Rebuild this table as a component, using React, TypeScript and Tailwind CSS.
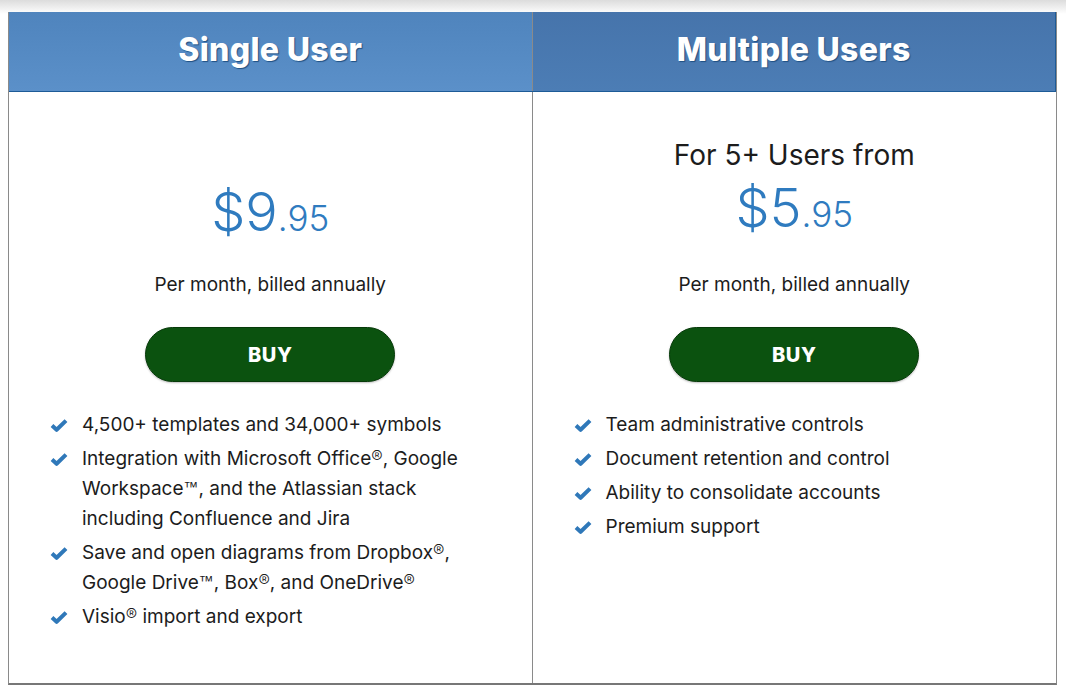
import React from 'react';

const Check: React.FC = () => (
  <svg className="w-[18px] h-[15px] shrink-0 mt-[8px]" viewBox="0 0 18 15" fill="none">
    <path d="M2 7.6 L6.6 11.8 L16 2.6" stroke="#2f78b9" strokeWidth={4} strokeLinejoin="round" />
  </svg>
);

const Item: React.FC<{ children: React.ReactNode }> = ({ children }) => (
  <li className="flex gap-[14px]">
    <Check />
    <span>{children}</span>
  </li>
);

const R = () => <sup className="text-[17px] font-light relative -top-[2px] leading-none">®</sup>;
const TM = () => (
  <sup className="text-[15px] relative -top-[3px] leading-none font-['Liberation_Sans',sans-serif]">™</sup>
);

const Price: React.FC<{ big: string }> = ({ big }) => (
  <div className="flex items-baseline text-[#2f7bbf] font-light leading-[56px] h-[56px]">
    <span className="text-[54px]">${big}</span>
    <span className="text-[35px]">.95</span>
  </div>
);

const BuyButton: React.FC = () => (
  <button className="w-[250px] h-[55px] rounded-full bg-[#0b520f] border border-[#063a09] text-white font-extrabold text-[20px] tracking-wide shadow-[0_1px_2px_rgba(0,0,0,0.25)]">
    BUY
  </button>
);

export default function App() {
  return (
    <div
      className="min-h-[692px] bg-white pt-[12px] bg-gradient-to-b from-[#dcdcdc] to-white bg-no-repeat [background-size:100%_14px]"
      style={{ fontFamily: 'Inter, "Open Sans", sans-serif' }}
    >
      <div className="ml-[8px] w-[1049px] border-l border-r border-[#8a8a8a] border-b-2 border-b-[#777] bg-white">
        {/* headers */}
        <div className="grid grid-cols-2 h-[80px] border-b border-[#1d5b97]">
          <div className="flex items-center justify-center pb-[3px] bg-gradient-to-b from-[#4f84bd] to-[#5b90c9] border-r border-[#8a8a8a]">
            <h2 className="text-white font-extrabold text-[32px] tracking-[0.3px] [text-shadow:1px_1px_1px_#1f4f82]">
              Single User
            </h2>
          </div>
          <div className="flex items-center justify-center pb-[3px] bg-gradient-to-b from-[#4674ab] to-[#4c7db5] border-r border-[#1d5b97]">
            <h2 className="text-white font-extrabold text-[32px] tracking-[0.3px] [text-shadow:1px_1px_1px_#1f4f82]">
              Multiple Users
            </h2>
          </div>
        </div>

        {/* bodies */}
        <div className="grid grid-cols-2 h-[591px] text-[#1c1c1c]">
          <div className="flex flex-col items-center border-r border-[#8a8a8a] pt-[92px]">
            <Price big="9" />
            <p className="mt-[33px] text-[19px] leading-[24px]">Per month, billed annually</p>
            <div className="mt-[30px]">
              <BuyButton />
            </div>
            <ul className="self-start ml-[41px] mt-[28px] flex flex-col gap-[4px] text-[19px] leading-[30px]">
              <Item>4,500+ templates and 34,000+ symbols</Item>
              <Item>
                Integration with Microsoft Office<R />, Google
                <br />
                Workspace<TM />, and the Atlassian stack
                <br />
                including Confluence and Jira
              </Item>
              <Item>
                Save and open diagrams from Dropbox<R />,
                <br />
                Google Drive<TM />, Box<R />, and OneDrive<R />
              </Item>
              <Item>
                Visio<R /> import and export
              </Item>
            </ul>
          </div>

          <div className="flex flex-col items-center pt-[46px]">
            <p className="text-[28px] leading-[34px]">For 5+ Users from</p>
            <div className="mt-[8px]">
              <Price big="5" />
            </div>
            <p className="mt-[37px] text-[19px] leading-[24px]">Per month, billed annually</p>
            <div className="mt-[30px]">
              <BuyButton />
            </div>
            <ul className="self-start ml-[41px] mt-[28px] flex flex-col gap-[4px] text-[19px] leading-[30px]">
              <Item>Team administrative controls</Item>
              <Item>Document retention and control</Item>
              <Item>Ability to consolidate accounts</Item>
              <Item>Premium support</Item>
            </ul>
          </div>
        </div>
      </div>
    </div>
  );
}
